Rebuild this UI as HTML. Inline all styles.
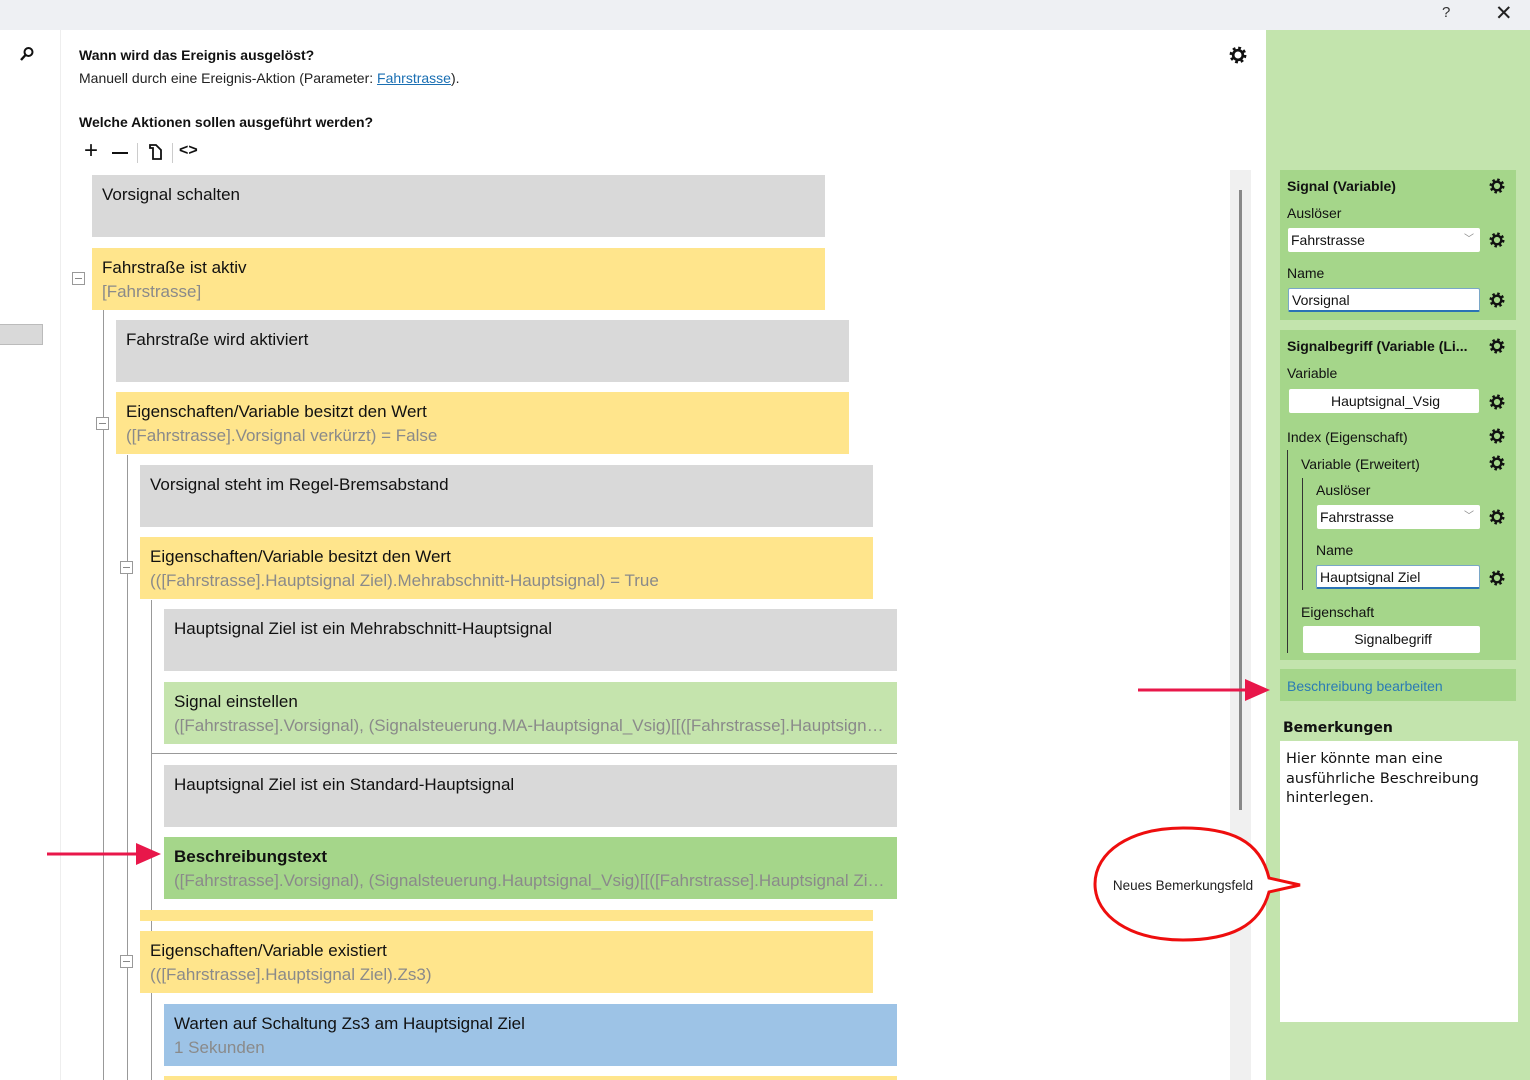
<!DOCTYPE html>
<html><head><meta charset="utf-8"><style>
*{margin:0;padding:0;box-sizing:border-box}
body{width:1530px;height:1080px;position:relative;overflow:hidden;background:#fff;font-family:"Liberation Sans",sans-serif;color:#111}
.a{position:absolute}
.blk{position:absolute;height:62px;padding:8px 10px 0 10px;font-size:17px;line-height:24px;white-space:nowrap;overflow:hidden}
.blk div{overflow:hidden;text-overflow:ellipsis}
.s{color:#8a8a8a}
.g{background:#d9d9d9}.y{background:#ffe58c}.lg{background:#c5e4ad}.dg{background:#a5d68a}.bl{background:#9dc3e6}
.w{width:733px}
.vl{position:absolute;width:1px;background:#999}
.mn{position:absolute;width:13px;height:13px;border:1px solid #999;background:#fff}
.mn:after{content:"";position:absolute;left:2px;right:2px;top:5px;height:1px;background:#888}
.lab{position:absolute;font-size:14px;color:#111}
.inp{position:absolute;background:#fff;font-size:14px;height:24px;line-height:24px;padding-left:3px;border-radius:2px}
.gear{position:absolute;width:16px;height:16px}
</style></head><body>
<div class="a" style="left:0;top:0;width:1530px;height:30px;background:#eef0f3"></div>
<div class="a" style="left:1442px;top:4px;font-size:15px;color:#333">?</div>
<div class="a" style="left:1495px;top:1px;font-size:21px;color:#222">✕</div>

<svg class="a" style="left:19px;top:46px" width="16" height="16" viewBox="0 0 16 16"><circle cx="9.5" cy="6" r="4" fill="none" stroke="#111" stroke-width="2"/><path d="M6.5 9 L2 14" stroke="#111" stroke-width="2.4"/></svg>
<div class="a" style="left:0;top:324px;width:43px;height:21px;background:#d9d9d9;border:1px solid #bbb;border-left:none"></div>
<div class="a" style="left:60px;top:30px;width:1px;height:1050px;background:#eee"></div>

<div class="a" style="left:79px;top:47px;font-size:14px;font-weight:bold">Wann wird das Ereignis ausgelöst?</div>
<div class="a" style="left:79px;top:70px;font-size:14px;color:#222">Manuell durch eine Ereignis-Aktion (Parameter: <span style="color:#1a6fb3;text-decoration:underline">Fahrstrasse</span>).</div>
<div class="a" style="left:79px;top:114px;font-size:14px;font-weight:bold">Welche Aktionen sollen ausgeführt werden?</div>
<div class="a" style="left:84px;top:138px;font-size:24px;line-height:26px">+</div>
<div class="a" style="left:112px;top:152px;width:16px;height:2px;background:#111"></div>
<div class="a" style="left:137px;top:143px;width:1px;height:20px;background:#ccc"></div>
<svg class="a" style="left:148px;top:144px" width="15" height="16" viewBox="0 0 15 16"><path d="M2 1h6l5 5v9H5V4H2z M5 4v11" fill="none" stroke="#111" stroke-width="1.8"/></svg>
<div class="a" style="left:172px;top:143px;width:1px;height:20px;background:#ccc"></div>
<div class="a" style="left:179px;top:142px;font-size:16px;font-weight:bold">&lt;&gt;</div>

<svg class="a" style="left:1229px;top:46px" width="18" height="18" viewBox="0 0 16 16"><circle cx="8" cy="8" r="6" fill="none" stroke="#111" stroke-width="3" stroke-dasharray="2.36 2.35"/><circle cx="8" cy="8" r="4.3" fill="none" stroke="#111" stroke-width="2.4"/></svg>

<!-- scrollbar -->
<div class="a" style="left:1230px;top:170px;width:21px;height:910px;background:#f0f0f0"></div>
<div class="a" style="left:1239px;top:190px;width:3px;height:620px;background:#888"></div>

<!-- tree lines -->
<div class="vl" style="left:103px;top:310px;height:770px"></div>
<div class="vl" style="left:127px;top:455px;height:625px"></div>
<div class="vl" style="left:151px;top:600px;height:480px"></div>
<div class="a" style="left:151px;top:753px;width:746px;height:1px;background:#999"></div>
<div class="mn" style="left:72px;top:272px"></div>
<div class="mn" style="left:96px;top:417px"></div>
<div class="mn" style="left:120px;top:561px"></div>
<div class="mn" style="left:120px;top:955px"></div>

<div class="blk g w" style="left:92px;top:175px"><div>Vorsignal schalten</div></div>
<div class="blk y w" style="left:92px;top:248px"><div>Fahrstraße ist aktiv</div><div class="s">[Fahrstrasse]</div></div>
<div class="blk g w" style="left:116px;top:320px"><div>Fahrstraße wird aktiviert</div></div>
<div class="blk y w" style="left:116px;top:392px"><div>Eigenschaften/Variable besitzt den Wert</div><div class="s">([Fahrstrasse].Vorsignal verkürzt) = False</div></div>
<div class="blk g w" style="left:140px;top:465px"><div>Vorsignal steht im Regel-Bremsabstand</div></div>
<div class="blk y w" style="left:140px;top:537px"><div>Eigenschaften/Variable besitzt den Wert</div><div class="s">(([Fahrstrasse].Hauptsignal Ziel).Mehrabschnitt-Hauptsignal) = True</div></div>
<div class="blk g w" style="left:164px;top:609px"><div>Hauptsignal Ziel ist ein Mehrabschnitt-Hauptsignal</div></div>
<div class="blk lg w" style="left:164px;top:682px"><div>Signal einstellen</div><div class="s">([Fahrstrasse].Vorsignal), (Signalsteuerung.MA-Hauptsignal_Vsig)[[([Fahrstrasse].Hauptsignal Ziel).Signalbegriff]]</div></div>
<div class="blk g w" style="left:164px;top:765px"><div>Hauptsignal Ziel ist ein Standard-Hauptsignal</div></div>
<div class="blk dg w" style="left:164px;top:837px"><div style="font-weight:bold">Beschreibungstext</div><div class="s">([Fahrstrasse].Vorsignal), (Signalsteuerung.Hauptsignal_Vsig)[[([Fahrstrasse].Hauptsignal Ziel).Signalbegriff]]</div></div>
<div class="a y" style="left:140px;top:910px;width:733px;height:11px"></div>
<div class="blk y w" style="left:140px;top:931px"><div>Eigenschaften/Variable existiert</div><div class="s">(([Fahrstrasse].Hauptsignal Ziel).Zs3)</div></div>
<div class="blk bl w" style="left:164px;top:1004px"><div>Warten auf Schaltung Zs3 am Hauptsignal Ziel</div><div class="s">1 Sekunden</div></div>
<div class="a y" style="left:164px;top:1076px;width:733px;height:4px"></div>

<!-- right panel -->
<div class="a" style="left:1266px;top:30px;width:264px;height:1050px;background:#c3e4ad"></div>
<div class="a dg" style="left:1280px;top:170px;width:236px;height:150px"></div>
<div class="a dg" style="left:1280px;top:330px;width:236px;height:330px"></div>
<div class="a dg" style="left:1280px;top:669px;width:236px;height:32px"></div>

<div class="lab" style="left:1287px;top:178px;font-weight:bold">Signal (Variable)</div>
<div class="lab" style="left:1287px;top:205px">Auslöser</div>
<div class="inp" style="left:1288px;top:228px;width:192px">Fahrstrasse<span style="position:absolute;right:6px;color:#888;font-size:10px">﹀</span></div>
<div class="lab" style="left:1287px;top:265px">Name</div>
<div class="inp" style="left:1288px;top:288px;width:192px;border:1px solid #7aa7c7;border-bottom:2px solid #2a72b5;line-height:22px">Vorsignal</div>

<div class="lab" style="left:1287px;top:338px;font-weight:bold">Signalbegriff (Variable (Li...</div>
<div class="lab" style="left:1287px;top:365px">Variable</div>
<div class="inp" style="left:1289px;top:389px;width:190px;text-align:center">Hauptsignal_Vsig</div>
<div class="lab" style="left:1287px;top:429px">Index (Eigenschaft)</div>
<div class="a" style="left:1287px;top:450px;width:1px;height:203px;background:#333"></div>
<div class="lab" style="left:1301px;top:456px">Variable (Erweitert)</div>
<div class="a" style="left:1302px;top:478px;width:1px;height:112px;background:#333"></div>
<div class="lab" style="left:1316px;top:482px">Auslöser</div>
<div class="inp" style="left:1317px;top:505px;width:163px">Fahrstrasse<span style="position:absolute;right:6px;color:#888;font-size:10px">﹀</span></div>
<div class="lab" style="left:1316px;top:542px">Name</div>
<div class="inp" style="left:1316px;top:565px;width:164px;border:1px solid #7aa7c7;border-bottom:2px solid #2a72b5;line-height:22px">Hauptsignal Ziel</div>
<div class="lab" style="left:1301px;top:604px">Eigenschaft</div>
<div class="inp" style="left:1303px;top:626px;width:177px;height:27px;line-height:27px;text-align:center">Signalbegriff</div>
<div class="lab" style="left:1287px;top:678px;color:#2a7bb5">Beschreibung bearbeiten</div>
<div class="lab" style="left:1283px;top:720px;font-weight:bold;font-family:'DejaVu Sans',sans-serif;font-size:14px">Bemerkungen</div>
<div class="a" style="left:1280px;top:741px;width:238px;height:281px;background:#fff;padding:9px 6px;font-family:'DejaVu Sans',sans-serif;font-size:14.5px;line-height:19.5px">Hier könnte man eine ausführliche Beschreibung hinterlegen.</div>

<svg class="a" style="left:0;top:0" width="1530" height="1080">
<defs><g id="gr"><circle cx="8" cy="8" r="6" fill="none" stroke="#111" stroke-width="3" stroke-dasharray="2.36 2.35"/><circle cx="8" cy="8" r="4.3" fill="none" stroke="#111" stroke-width="2.4"/></g></defs>
<use href="#gr" x="1489" y="178"/><use href="#gr" x="1489" y="232"/><use href="#gr" x="1489" y="292"/>
<use href="#gr" x="1489" y="338"/><use href="#gr" x="1489" y="394"/><use href="#gr" x="1489" y="428"/>
<use href="#gr" x="1489" y="455"/><use href="#gr" x="1489" y="509"/><use href="#gr" x="1489" y="570"/>
<path d="M47 854 H138" stroke="#e8174a" stroke-width="3"/><path d="M136 843 L161 854 L136 865 Z" fill="#e8174a"/>
<path d="M1138 690 H1248" stroke="#e8174a" stroke-width="3"/><path d="M1245 679 L1270 690 L1245 701 Z" fill="#e8174a"/>
<path d="M1269 878 C1260 840 1230 828 1183 828 C1130 828 1095 852 1095 884 C1095 916 1130 940 1183 940 C1230 940 1260 926 1269 892 L1300 885 Z" fill="#fff" stroke="#ee0e0e" stroke-width="3"/>
<text x="1183" y="890" text-anchor="middle" font-family="Liberation Sans Narrow, Liberation Sans, sans-serif" font-size="13.5" fill="#222">Neues Bemerkungsfeld</text>
</svg>
</body></html>
